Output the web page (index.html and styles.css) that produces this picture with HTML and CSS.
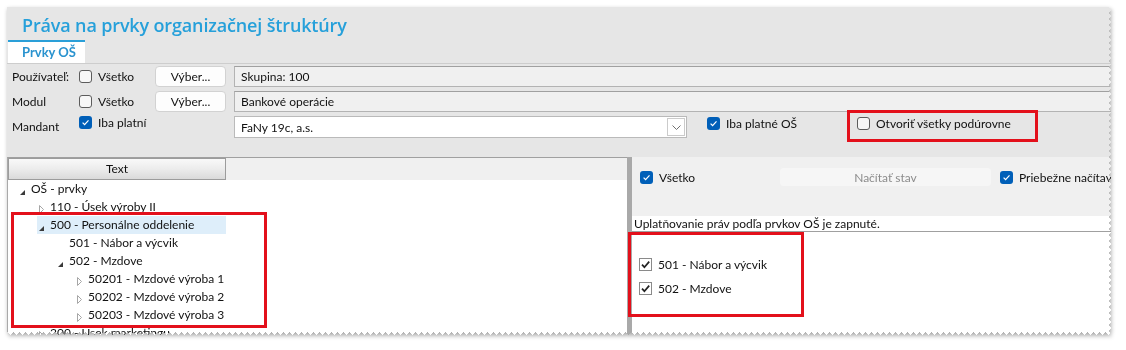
FILE: index.html
```html
<!DOCTYPE html>
<html lang="sk">
<head>
    <meta charset="UTF-8">
    <title>Práva na prvky organizačnej štruktúry</title>
    <link rel="stylesheet" href="styles.css">
</head>
<body>
<div class="shot">
    <div class="window">
        <h1 class="title">Práva na prvky organizačnej štruktúry</h1>
        <div class="tabs">
            <div class="tab active">Prvky OŠ</div>
        </div>

        <div class="filters">
            <div class="row">
                <span class="label">Používateľ:</span>
                <label class="check"><span class="box"></span>Všetko</label>
                <button class="btn" type="button">Výber...</button>
                <div class="field">Skupina: 100</div>
            </div>
            <div class="row">
                <span class="label">Modul</span>
                <label class="check"><span class="box"></span>Všetko</label>
                <button class="btn" type="button">Výber...</button>
                <div class="field">Bankové operácie</div>
            </div>
            <div class="row row-top">
                <span class="label label-tall">Mandant</span>
                <label class="check">
                    <span class="box checked"><svg width="13" height="13" viewBox="0 0 13 13"><path d="M3.6 6.7l2 2 3.9-4.3" fill="none" stroke="#fff" stroke-width="1.2"/></svg></span>Iba platní
                </label>
                <div class="combo">
                    <span>FaNy 19c, a.s.</span>
                    <span class="combo-btn"><svg width="9" height="5" viewBox="0 0 9 5"><path d="M0.5 0.5l4 4 4-4" fill="none" stroke="#707070"/></svg></span>
                </div>
                <label class="check check-os">
                    <span class="box checked"><svg width="13" height="13" viewBox="0 0 13 13"><path d="M3.6 6.7l2 2 3.9-4.3" fill="none" stroke="#fff" stroke-width="1.2"/></svg></span>Iba platné OŠ
                </label>
                <label class="check check-open">
                    <span class="box"></span>Otvoriť všetky podúrovne
                    <span class="mark mark-open"></span>
                </label>
            </div>
        </div>

        <div class="split">
            <div class="tree-pane">
                <div class="tree-head">
                    <div class="col-head">Text</div>
                </div>
                <div class="tree">
                    <div class="node lvl-0"><div class="node-in"><span class="toggle open"><svg width="5" height="5" viewBox="0 0 5 5"><path d="M5 0V5H0Z" fill="#3a3a3a"/></svg></span>OŠ - prvky</div></div>
                    <div class="node lvl-1"><div class="node-in"><span class="toggle closed"><svg width="5" height="9" viewBox="0 0 5 9"><path d="M0.5 0.5L4.5 4.5 0.5 8.5Z" fill="none" stroke="#a6a6a6"/></svg></span>110 - Úsek výroby II</div></div>
                    <div class="node lvl-1"><div class="node-in selected"><span class="toggle open"><svg width="5" height="5" viewBox="0 0 5 5"><path d="M5 0V5H0Z" fill="#3a3a3a"/></svg></span>500 - Personálne oddelenie</div></div>
                    <div class="node lvl-2"><div class="node-in"><span class="toggle"></span>501 - Nábor a výcvik</div></div>
                    <div class="node lvl-2"><div class="node-in"><span class="toggle open"><svg width="5" height="5" viewBox="0 0 5 5"><path d="M5 0V5H0Z" fill="#3a3a3a"/></svg></span>502 - Mzdove</div></div>
                    <div class="node lvl-3"><div class="node-in"><span class="toggle closed"><svg width="5" height="9" viewBox="0 0 5 9"><path d="M0.5 0.5L4.5 4.5 0.5 8.5Z" fill="none" stroke="#a6a6a6"/></svg></span>50201 - Mzdové výroba 1</div></div>
                    <div class="node lvl-3"><div class="node-in"><span class="toggle closed"><svg width="5" height="9" viewBox="0 0 5 9"><path d="M0.5 0.5L4.5 4.5 0.5 8.5Z" fill="none" stroke="#a6a6a6"/></svg></span>50202 - Mzdové výroba 2</div></div>
                    <div class="node lvl-3"><div class="node-in"><span class="toggle closed"><svg width="5" height="9" viewBox="0 0 5 9"><path d="M0.5 0.5L4.5 4.5 0.5 8.5Z" fill="none" stroke="#a6a6a6"/></svg></span>50203 - Mzdové výroba 3</div></div>
                    <div class="node lvl-1"><div class="node-in"><span class="toggle closed"><svg width="5" height="9" viewBox="0 0 5 9"><path d="M0.5 0.5L4.5 4.5 0.5 8.5Z" fill="none" stroke="#a6a6a6"/></svg></span>200 - Úsek marketingu</div></div>
                </div>
                <div class="mark mark-tree"></div>
            </div>

            <div class="splitter"></div>

            <div class="right-pane">
                <div class="toolbar">
                    <label class="check check-all">
                        <span class="box checked"><svg width="13" height="13" viewBox="0 0 13 13"><path d="M3.6 6.7l2 2 3.9-4.3" fill="none" stroke="#fff" stroke-width="1.2"/></svg></span>Všetko
                    </label>
                    <button class="btn btn-load" type="button" disabled>Načítať stav</button>
                    <label class="check check-live">
                        <span class="box checked"><svg width="13" height="13" viewBox="0 0 13 13"><path d="M3.6 6.7l2 2 3.9-4.3" fill="none" stroke="#fff" stroke-width="1.2"/></svg></span>Priebežne načítavať
                    </label>
                </div>
                <div class="info">Uplatňovanie práv podľa prvkov OŠ je zapnuté.</div>
                <div class="list">
                    <label class="item"><span class="cbox"><svg width="13" height="13" viewBox="0 0 13 13"><path d="M3 6.6l2.4 2.6 4.8-5.6" fill="none" stroke="#222" stroke-width="1.7"/></svg></span>501 - Nábor a výcvik</label>
                    <label class="item"><span class="cbox"><svg width="13" height="13" viewBox="0 0 13 13"><path d="M3 6.6l2.4 2.6 4.8-5.6" fill="none" stroke="#222" stroke-width="1.7"/></svg></span>502 - Mzdove</label>
                </div>
                <div class="mark mark-list"></div>
            </div>
        </div>
    </div>
</div>
</body>
</html>
```

FILE: styles.css
```css
body {
    margin: 0;
    background-color: #fff;
    font-family: Lato, "Open Sans", sans-serif;
    font-size: 12px;
    color: #111;
}
.shot {
    padding: 7px;
    filter: drop-shadow(1px 2px 2px rgba(0, 0, 0, 0.35));
}
.window {
    width: 1104px;
    height: 328px;
    background-color: #e6e6e6;
    overflow: hidden;
    display: flex;
    flex-direction: column;
    /* torn right and bottom edges */
    -webkit-mask:
        conic-gradient(from -45deg at bottom, #000 90deg, #0000 0) 0 0 / 6px 100% repeat-x,
        conic-gradient(from 225deg at right, #000 90deg, #0000 0) 0 0 / 100% 6px repeat-y;
    -webkit-mask-composite: source-in;
    mask:
        conic-gradient(from -45deg at bottom, #000 90deg, #0000 0) 0 0 / 6px 100% repeat-x,
        conic-gradient(from 225deg at right, #000 90deg, #0000 0) 0 0 / 100% 6px repeat-y;
    mask-composite: intersect;
}

.title {
    margin: 0;
    padding: 7px 0 4px 15px;
    font-family: "Open Sans", Lato, sans-serif;
    font-size: 18px;
    line-height: 22px;
    font-weight: 600;
    letter-spacing: -0.15px;
    color: #26a0da;
}

.tabs {
    display: flex;
    height: 23px;
    padding-left: 1px;
    border-bottom: 1px solid #cdcdcd;
}
.tab {
    width: 77px;
    box-sizing: border-box;
    padding-left: 14px;
    line-height: 21px;
    font-size: 13px;
    font-weight: 700;
    color: #2a93cf;
}
.tab.active {
    background-color: #fff;
    border-top: 2px solid #2a9fd8;
}

/* filter rows */
.filters {
    display: flex;
    flex-direction: column;
    gap: 4px;
    padding: 2px 0 19px 5px;
}
.row {
    display: flex;
    align-items: center;
    height: 21px;
}
.row-top {
    align-items: flex-start;
    height: 22px;
}
.label {
    width: 67px;
    flex-shrink: 0;
}
.label-tall {
    line-height: 22px;
}
.check {
    display: flex;
    align-items: center;
    gap: 6px;
    width: 76px;
    flex-shrink: 0;
    line-height: 13px;
    white-space: nowrap;
}
.box {
    width: 13px;
    height: 13px;
    box-sizing: border-box;
    border: 1px solid #5c5c5c;
    border-radius: 3px;
    background-color: #f7f7f7;
    flex-shrink: 0;
}
.box.checked {
    border: none;
    background-color: #005fb8;
}
.box svg {
    display: block;
}
.btn {
    width: 71px;
    height: 21px;
    flex-shrink: 0;
    padding: 0;
    background-color: #fdfdfd;
    border: 1px solid #d2d2d2;
    border-radius: 4px;
    font-family: inherit;
    font-size: 12px;
    color: #111;
}
.field {
    flex: 1;
    height: 21px;
    box-sizing: border-box;
    margin: 0 -6px 0 8px;
    padding-left: 6px;
    line-height: 19px;
    background-color: #f0f0f0;
    border: 1px solid #b3b3b3;
    border-top-color: #a0a0a0;
}
.combo {
    display: flex;
    align-items: center;
    width: 453px;
    height: 22px;
    box-sizing: border-box;
    margin-left: 79px;
    padding-left: 6px;
    background-color: #fff;
    border: 1px solid #bababa;
    flex-shrink: 0;
}
.combo-btn {
    display: flex;
    align-items: center;
    justify-content: center;
    width: 18px;
    height: 18px;
    box-sizing: border-box;
    margin: 0 1px 0 auto;
    border: 1px solid #cbcbcb;
}
.check-os {
    width: 150px;
    margin-left: 20px;
    margin-top: 1px;
}
.check-open {
    position: relative;
    width: auto;
    margin-top: 1px;
}

/* red annotation boxes */
.mark {
    position: absolute;
    box-sizing: border-box;
    border: 3px solid #e3101b;
}
.mark-open {
    left: -10px;
    top: -7px;
    width: 191px;
    height: 32px;
}
.mark-tree {
    left: 3px;
    top: 54px;
    width: 256px;
    height: 116px;
}
.mark-list {
    left: -4px;
    top: 75px;
    width: 176px;
    height: 85px;
}

/* lower split area */
.split {
    flex: 1;
    display: flex;
}
.tree-pane {
    position: relative;
    width: 620px;
    flex-shrink: 0;
    box-sizing: border-box;
    background-color: #fff;
    border-top: 1px solid #a0a0a0;
    border-left: 1px solid #a9a9a9;
}
.tree-head {
    height: 22px;
    background-color: #f0f0f0;
}
.col-head {
    width: 218px;
    height: 22px;
    box-sizing: border-box;
    line-height: 20px;
    text-align: center;
    border: 1px solid #9c9c9c;
    background: linear-gradient(#f9f9f9, #ececec 50%, #dadada);
}
.tree {
    width: 218px;
}
.node {
    display: flex;
    height: 18px;
    white-space: nowrap;
}
.node-in {
    flex: 1;
    display: flex;
    align-items: center;
    line-height: 18px;
}
.node-in.selected {
    background-color: #deeefa;
}
.lvl-0 { padding-left: 10px; }
.lvl-1 { padding-left: 29px; }
.lvl-2 { padding-left: 48px; }
.lvl-3 { padding-left: 67px; }
.toggle {
    display: flex;
    align-items: center;
    width: 13px;
    height: 18px;
    flex-shrink: 0;
}
.toggle svg {
    display: block;
    margin-left: 2px;
}
.toggle.open svg {
    margin-top: 6px;
}
.toggle.closed svg {
    margin-top: 4px;
}

.splitter {
    width: 5px;
    flex-shrink: 0;
    background-color: #a9a9a9;
}

.right-pane {
    position: relative;
    flex: 1;
    min-width: 0;
    display: flex;
    flex-direction: column;
    background-color: #fff;
}
.toolbar {
    display: flex;
    align-items: flex-start;
    height: 49px;
    padding: 10px 0 0 8px;
    background-color: #f0f0f0;
}
.toolbar .check {
    margin-top: 4px;
}
.check-all {
    width: 139px;
}
.btn-load {
    width: 213px;
    height: 20px;
    margin-right: 8px;
    background-color: #f6f6f6;
    border-color: #f0f0f0;
    color: #8c8c8c;
}
.check-live {
    width: auto;
}
.info {
    height: 15px;
    padding-left: 2px;
    line-height: 15px;
    white-space: nowrap;
    border-bottom: 1px solid #a0a0a0;
}
.list {
    flex: 1;
    display: flex;
    flex-direction: column;
    gap: 11px;
    padding: 26px 0 0 7px;
}
.item {
    display: flex;
    align-items: center;
    gap: 6px;
    line-height: 13px;
}
.cbox {
    width: 13px;
    height: 13px;
    box-sizing: border-box;
    border: 1px solid #8a8a8a;
    background-color: #fff;
}
.cbox svg {
    display: block;
    margin: -1px 0 0 -1px;
}
```
